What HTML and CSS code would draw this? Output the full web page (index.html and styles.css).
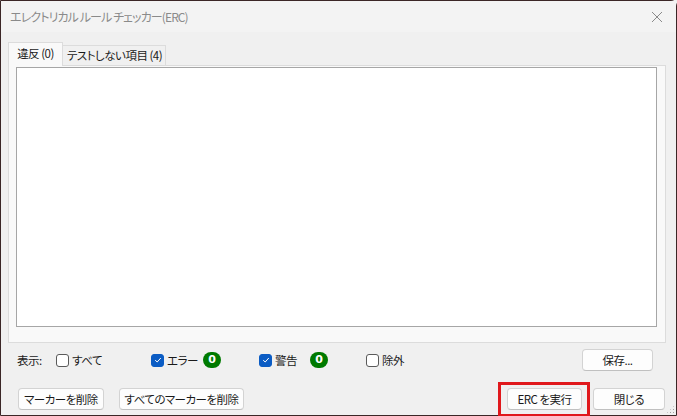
FILE: index.html
```html
<!DOCTYPE html>
<html lang="ja">
<head>
<meta charset="utf-8">
<link rel="stylesheet" href="styles.css">
</head>
<body>
<div class="window">
  <div class="titlebar">
    <span class="title">エレクトリカル ルール チェッカー(ERC)</span>
    <svg class="close" width="12" height="12" viewBox="0 0 12 12"><path d="M1 1 L11 11 M11 1 L1 11" stroke="#8a8a8a" stroke-width="1" fill="none"/></svg>
  </div>
  <div class="body">
    <div class="tabs">
      <div class="tab active">違反 (0)</div>
      <div class="tab second">テストしない項目 (4)</div>
    </div>
    <div class="panel">
      <div class="list"></div>
    </div>
    <div class="filters">
      <span class="lbl">表示:</span>
      <label class="chk c-all"><span class="box"></span>すべて</label>
      <label class="chk c-err"><span class="box on"><svg width="8" height="8" viewBox="0 0 8 8"><path d="M1.2 4.2 L3.2 6 L6.8 2" stroke="#fff" stroke-width="1" fill="none"/></svg></span>エラー</label>
      <span class="badge b-err">0</span>
      <label class="chk c-warn"><span class="box on"><svg width="8" height="8" viewBox="0 0 8 8"><path d="M1.2 4.2 L3.2 6 L6.8 2" stroke="#fff" stroke-width="1" fill="none"/></svg></span>警告</label>
      <span class="badge b-warn">0</span>
      <label class="chk c-excl"><span class="box"></span>除外</label>
      <button class="btn save">保存...</button>
    </div>
    <div class="actions">
      <button class="btn del">マーカーを削除</button>
      <button class="btn delall">すべてのマーカーを削除</button>
      <span class="spacer"></span>
      <button class="btn run">ERC を実行</button>
      <button class="btn closebtn">閉じる</button>
    </div>
  </div>
  <div class="grip"></div>
</div>
</body>
</html>
```
FILE: styles.css
```css
* { box-sizing: border-box; }
html, body { margin: 0; padding: 0; }
body {
  width: 677px; height: 416px; overflow: hidden;
  font-family: "Noto Sans CJK JP", "Noto Sans", sans-serif;
  font-size: 11.5px;
  letter-spacing: -0.5px;
  font-feature-settings: "palt";
  color: #1a1a1a;
  background: #f0f0f0;
}
.window {
  position: relative;
  width: 677px; height: 416px;
  border: 1px solid #3b2626;
  border-top-right-radius: 6px;
  background: #f0f0f0;
  display: flex; flex-direction: column;
}
.titlebar {
  height: 31px; flex: none;
  background: #f3f3f3;
  display: flex; align-items: center; justify-content: space-between;
  padding: 0 13px 0 9px;
}
.title { color: #8a8a8a; letter-spacing: -0.9px; font-size: 12px; }
.body { flex: 1; display: flex; flex-direction: column; padding: 10px 10px 0 7px; }
.tabs { display: flex; align-items: flex-end; height: 23px; }
.tab {
  height: 20px; white-space: nowrap;
  border: 1px solid #dcdcdc; border-bottom: none;
  background: #f0f0f0; line-height: 19px; text-align: center;
}
.tab.active {
  width: 55px; background: #f9f9f9; line-height: 21px;
  position: relative; z-index: 1; margin-bottom: -1px; height: 24px;
}
.tab.second { width: 103px; border-left: none; padding-left: 1px; }
.panel {
  height: 278px; flex: none;
  border: 1px solid #dcdcdc; background: #f9f9f9;
  padding: 1px 8px 15px 7px;
}
.list { height: 260px; background: #fff; border: 1px solid #a6a6a6; }
.filters { display: flex; align-items: center; height: 22px; margin-top: 6px; padding-left: 9px; white-space: nowrap; }
.lbl { width: 39px; }
.chk { display: flex; align-items: center; flex: none; }
.box {
  width: 13px; height: 13px; border: 1px solid #5a5a5a; border-radius: 3px;
  background: #fff; margin-right: 3px; display: inline-flex; align-items: center; justify-content: center; flex: none;
}
.box.on { background: #0b5cc4; border-color: #0b5cc4; }
.c-all { width: 95px; }
.c-err { width: 52px; }
.c-warn { width: 51px; }
.b-err, .b-warn { margin-right: 38px; }
.badge {
  width: 18px; height: 16px; border-radius: 8px; background: #007a00; flex: none;
  color: #fff; font-weight: bold; line-height: 16px; text-align: center; letter-spacing: 0;
  font-family: "DejaVu Sans", sans-serif; font-size: 11px;
}
.btn {
  font: inherit; color: #1a1a1a; letter-spacing: -0.5px; white-space: nowrap;
  height: 22px; padding: 0;
  background: #fdfdfd; border: 1px solid #d3d3d3; border-bottom-color: #c0c0c0;
  border-radius: 4px;
}
.save { margin-left: auto; width: 71px; margin-right: 13px; }
.actions { display: flex; align-items: center; margin-top: 17px; padding-left: 10px; }
.del { width: 86px; }
.delall { width: 125px; margin-left: 15px; }
.spacer { flex: 1; }
.run { width: 75px; position: relative; }
.run::after {
  content: ""; position: absolute;
  top: -7px; bottom: -8px; left: -10px; right: -9px;
  border: 3px solid #e0181c;
}
.closebtn { width: 72px; margin-left: 11px; margin-right: 1px; }
.grip {
  position: absolute; right: 1px; bottom: 1px; width: 9px; height: 9px;
  background-image: radial-gradient(circle, #a0a0a0 0.8px, transparent 1px);
  background-size: 3px 3px;
  clip-path: polygon(100% 0, 100% 100%, 0 100%);
}
```
